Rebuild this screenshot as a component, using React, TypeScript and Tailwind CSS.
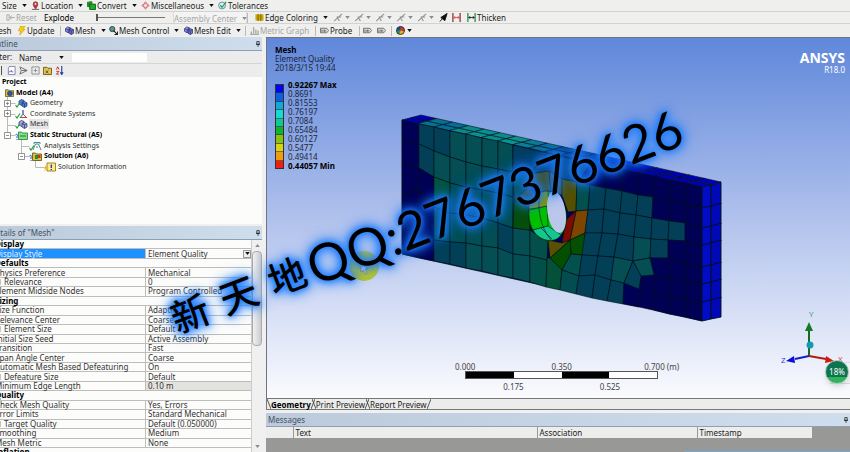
import type { ReactNode } from "react";

type Pt = [number, number];

/* ---------- small icons ---------- */

const Caret = ({ dim = false }: { dim?: boolean }) => (
  <svg viewBox="0 0 6 4" className={dim ? "h-[3px] w-[5px] shrink-0 text-[#8a8a8a]" : "h-[3px] w-[5px] shrink-0 text-[#111]"}>
    <path d="M0 0h6L3 4z" fill="currentColor" />
  </svg>
);

const Svg = ({ children }: { children: ReactNode }) => (
  <svg viewBox="0 0 10 10" className="h-[9px] w-[9px] shrink-0" fill="none">
    {children}
  </svg>
);

const PinIcon = () => (
  <Svg>
    <path d="M5 9C3 6 2.4 5 2.4 3.4a2.6 2.6 0 0 1 5.2 0C7.600 5 7 6 5 9z" fill="#c4303c" stroke="#6e1a26" strokeWidth=".6" />
    <circle cx="5" cy="3.300" r="1" fill="#fff" />
    <path d="M1 9.300h8" stroke="#555" />
  </Svg>
);
const ConvertIcon = () => (
  <Svg>
    <path d="M0 1l5-1 1 1v5l-5 1-1-1z" fill="#1f8f2c" />
    <path d="M3 3.500h6.500V9.500H3z" fill="#14b428" stroke="#0b5c16" />
    <path d="M4 2.500l2 2" stroke="#d22" />
  </Svg>
);
const MiscIcon = () => (
  <Svg>
    <path d="M5 .8L6.500 3h-3zM5 9.200L3.500 7h3zM.8 5L3 3.500v3zM9.200 5L7 6.500v-3z" stroke="#d4444c" strokeWidth=".8" />
  </Svg>
);
const TolIcon = () => (
  <Svg>
    <circle cx="4.500" cy="5" r="3.800" fill="#dcebf4" stroke="#5c86a4" />
    <path d="M2.500 4.500l2 2.500 4.500-6" stroke="#1f9a54" strokeWidth="1.300" />
  </Svg>
);
const BoltIcon = () => (
  <Svg>
    <path d="M4 0h5L6.500 3.600H9L3 10l1-4.600H1.500z" fill="#f6cf12" stroke="#b98a00" strokeWidth=".5" />
  </Svg>
);
const MeshIcon = () => (
  <Svg>
    <path d="M.5 3L3 1l3 1v4L3.500 7.500.5 6z" fill="#8d92d6" stroke="#2b2c78" strokeWidth=".8" />
    <path d="M4.500 4L7 3l2.500 1v4L7 9.500 4.500 8z" fill="#6f78cc" stroke="#22246e" strokeWidth=".8" />
    <path d="M.5 3l3 1.200L6 2M3.500 4.200v3M4.500 4.500L7 5.500l2.500-1.300M7 5.500v4" stroke="#22246e" strokeWidth=".6" />
  </Svg>
);
const ControlIcon = () => (
  <Svg>
    <circle cx="3.600" cy="3.400" r="2.900" fill="#5b9c6c" stroke="#263c7a" />
    <path d="M5 5l4.500 4.500M9.500 6v3.500H6" stroke="#222" strokeWidth="1.200" />
  </Svg>
);
const BarsIcon = () => (
  <Svg>
    <path d="M0 9.500h10M1.500 9V6M4 9V1M6.500 9V4M9 9V5" stroke="#aaa" strokeWidth="1.500" />
  </Svg>
);
const TagIcon = () => (
  <Svg>
    <path d="M.5 2.500h7L9.500 5l-2 2.500h-7z" fill="#eee" stroke="#444" strokeWidth=".8" />
    <path d="M2 4v2.500M3.500 4v2.500M5 4v2.500M6.500 4v2.500" stroke="#444" strokeWidth=".8" />
  </Svg>
);
const BallIcon = () => (
  <Svg>
    <circle cx="5" cy="5" r="4.700" fill="#244a9c" />
    <path d="M5 5V.3A4.700 4.700 0 0 1 9.500 6z" fill="#d23a2a" />
    <path d="M5 5l4.500 1A4.700 4.700 0 0 1 3 9.300z" fill="#e2b020" />
    <path d="M5 5L3 9.300A4.700 4.700 0 0 1 .3 5z" fill="#2b9c3c" />
    <circle cx="5" cy="5" r="4.400" stroke="#222" strokeWidth=".7" />
  </Svg>
);
const ColoringIcon = () => (
  <Svg>
    <path d="M.5 1.500h9v7h-9z" fill="#c9a800" />
    <path d="M3.500 1v8M6.500 1v8" stroke="#5a4c00" strokeWidth=".8" />
  </Svg>
);
const EdgeIcon = () => (
  <Svg>
    <path d="M0 9l4-3.500L9 1M3 4.500h5M4 5.500L6 9" stroke="#8f8f8f" strokeWidth="1.200" />
  </Svg>
);
const ArrowIcon = () => (
  <Svg>
    <path d="M1 9.500l3-3.500M2 5l7-4.500L6.500 8.500z" fill="#111" stroke="#111" />
  </Svg>
);
const GapIcon = ({ green = false }: { green?: boolean }) => (
  <Svg>
    <path d="M1 0v10M9 0v10" stroke={green ? "#128a30" : "#8c2020"} strokeWidth="1.300" />
    <path d="M2 5h6M3.500 3.500L2 5l1.500 1.500M6.500 3.500L8 5 6.500 6.500" stroke={green ? "#111" : "#c44"} strokeWidth=".9" />
  </Svg>
);
const ResetIcon = () => (
  <Svg>
    <path d="M1 2h2.500v6H1zM4 5h6M6.500 3L4 5l2.500 2" stroke="#aaa" />
  </Svg>
);
const PinHead = () => (
  <svg viewBox="0 0 5 7" className="h-[6px] w-[4px] shrink-0" fill="none">
    <path d="M1 .5h3v3.500H1zM0 4h5M2.500 4v3" stroke="#222" strokeWidth="1" />
  </svg>
);

/* ---------- toolbar ---------- */

const Tool = ({ w, icon, label, caret = false, dim = false }: { w: string; icon?: ReactNode; label?: string; caret?: boolean; dim?: boolean }) => (
  <button
    type="button"
    aria-label={label ? undefined : "tool"}
    className={`flex h-full shrink-0 items-center gap-px whitespace-nowrap ${w} ${dim ? "text-[#a5a5a5]" : "text-[#1c1c1c]"}`}
  >
    {icon}
    {label && <span>{label}</span>}
    {caret && <span className={label ? "ml-1" : "ml-px"}><Caret dim={dim} /></span>}
  </button>
);
const Sep = ({ w }: { w: string }) => (
  <span className={`flex h-[10px] shrink-0 ${w}`}><span className="w-px bg-[#b9b9b9]" /></span>
);

const Toolbars = () => (
  <header className="bg-[#efefee] text-[8px] leading-[11px]">
    <div className="flex h-[12px] items-center overflow-hidden border-b border-[#d2d2d2]">
      <Tool w="w-[31px] pl-0.5" label="Size" caret />
      <Tool w="w-[56px]" icon={<PinIcon />} label="Location" caret />
      <Tool w="w-[54px]" icon={<ConvertIcon />} label="Convert" caret />
      <Tool w="w-[77px]" icon={<MiscIcon />} label="Miscellaneous" caret />
      <Tool w="w-[60px]" icon={<TolIcon />} label="Tolerances" />
    </div>
    <div className="flex h-[12px] items-center overflow-hidden border-b border-[#d2d2d2] pl-1.5">
      <Tool w="w-[38px]" icon={<ResetIcon />} label="Reset" dim />
      <label htmlFor="explode" className="w-[52px]">Explode</label>
      <input id="explode" type="range" defaultValue={0} className="h-[8px] w-[69px] appearance-none bg-[linear-gradient(#777,#777)] bg-[length:100%_1px] bg-center bg-no-repeat [&::-webkit-slider-thumb]:h-[7px] [&::-webkit-slider-thumb]:w-[2px] [&::-webkit-slider-thumb]:appearance-none [&::-webkit-slider-thumb]:bg-[#555]" />
      <span className="ml-2 flex h-full w-[74px] items-center border-x border-[#dcdcdc] bg-[#f3f3f3]">
        <Tool w="w-[72px] pt-0.5" label="Assembly Center" caret dim />
      </span>
      <Sep w="w-[8px]" />
      <Tool w="w-[79px]" icon={<ColoringIcon />} label="Edge Coloring" caret />
      {[0, 1, 2, 3, 4].map((i) => <Tool key={i} w="w-[21px]" icon={<EdgeIcon />} caret dim />)}
      <Tool w="w-[13px]" icon={<ArrowIcon />} />
      <Tool w="w-[15px]" icon={<GapIcon />} />
      <Tool w="w-[60px]" icon={<GapIcon green />} label="Thicken" />
    </div>
    <div className="flex h-[13px] items-center overflow-hidden">
      <span className="flex w-[17px] justify-start"><Tool w="-ml-[9px]" label="Mesh" /></span>
      <Tool w="w-[43px]" icon={<BoltIcon />} label="Update" />
      <Sep w="w-[5px]" />
      <Tool w="w-[44px]" icon={<MeshIcon />} label="Mesh" caret />
      <Tool w="w-[75px]" icon={<ControlIcon />} label="Mesh Control" caret />
      <Tool w="w-[61px]" icon={<MeshIcon />} label="Mesh Edit" caret />
      <Sep w="w-[5px]" />
      <Tool w="w-[65px]" icon={<BarsIcon />} label="Metric Graph" dim />
      <Sep w="w-[5px]" />
      <Tool w="w-[39px]" icon={<TagIcon />} label="Probe" />
      <Sep w="w-[4px]" />
      <Tool w="w-[14px]" icon={<TagIcon />} />
      <Tool w="w-[14px]" icon={<TagIcon />} />
      <Sep w="w-[5px]" />
      <Tool w="w-[20px]" icon={<BallIcon />} caret />
    </div>
  </header>
);

/* ---------- outline ---------- */

const PanelTitle = ({ children, cut = false }: { children: ReactNode; cut?: boolean }) => (
  <div className="flex h-[14px] shrink-0 items-center justify-between overflow-hidden border-b border-[#8e9fb2] bg-gradient-to-r from-[#bccbdc] to-[#cfdeec] px-0.5 text-[8px] text-[#46505e]">
    <h2 className={cut ? "-ml-3 whitespace-nowrap" : "whitespace-nowrap"}>{children}</h2>
    <button type="button" aria-label="Pin panel"><PinHead /></button>
  </div>
);

const Expander = ({ open = false }: { open?: boolean }) => (
  <svg viewBox="0 0 7 7" className="h-[7px] w-[7px] shrink-0">
    <path d={open ? "M.5.5h6v6h-6zM2 3.500h3" : "M.5.5h6v6h-6zM2 3.500h3M3.500 2v3"} fill="#fff" stroke="#777" strokeWidth=".8" />
  </svg>
);
const Check = ({ children }: { children: ReactNode }) => (
  <svg viewBox="0 0 13 10" className="h-[10px] w-[13px] shrink-0" fill="none">
    {children}
    <path d="M.5 7l1.500 2L5 4.500" stroke="#1fa33a" strokeWidth="1.200" />
  </svg>
);
const Cubes = ({ c }: { c: string }) => (
  <g fill={c} stroke="#1e2f6c" strokeWidth=".7">
    <path d="M4 3l2.500-1.500L9 2.500V6L6.500 7.500 4 6z" />
    <path d="M7 4.500L9.500 3.500 12 5v3L9.500 9.500 7 8zM7 4.500l2.500 1.200L12 5M9.500 5.700v3.600" />
  </g>
);

const treeRows: { indent: string; label: string; bold?: boolean; sel?: boolean; exp?: "open" | "shut"; icon?: ReactNode }[] = [
  { indent: "pl-0", label: "Project", bold: true },
  {
    indent: "pl-[5px]", label: "Model (A4)", bold: true,
    icon: <svg viewBox="0 0 10 10" className="h-[9px] w-[9px]"><path d="M.5 2h3l1 1h5v6.500h-9z" fill="#e0bf3a" stroke="#4a4a20" strokeWidth=".8" /><path d="M3 4.500l2-1 3 1v3L5.500 9 3 7.500z" fill="#2c55b8" stroke="#123" strokeWidth=".6" /></svg>,
  },
  { indent: "pl-1", label: "Geometry", exp: "shut", icon: <Check><Cubes c="#4a7ce0" /></Check> },
  {
    indent: "pl-1", label: "Coordinate Systems", exp: "shut",
    icon: <Check><path d="M8 1v4" stroke="#1a44d0" strokeWidth="1.200" /><path d="M8 5L5 9" stroke="#18a8c0" strokeWidth="1.200" /><path d="M8 5l4 4M5 8.500h7" stroke="#d23c3c" /></Check>,
  },
  { indent: "pl-[15px]", label: "Mesh", sel: true, icon: <Check><Cubes c="#a6a4e0" /></Check> },
  {
    indent: "pl-1", label: "Static Structural (A5)", bold: true, exp: "open",
    icon: <svg viewBox="0 0 13 10" className="h-[10px] w-[13px]" fill="none"><path d="M3.500 2h3l1 1h5v6.500h-9z" fill="#7fe08a" stroke="#1f7a34" strokeWidth=".8" /><path d="M5 6h6" stroke="#1f7a34" /><path d="M.5 5c1-1.500 3 0 1.500 1.500V8M2 9v1" stroke="#2450c8" /></svg>,
  },
  {
    indent: "pl-[29px]", label: "Analysis Settings",
    icon: <Check><path d="M4 9L6.500 3h3L12 9M5 3V1.500h6V3M7 6h2" stroke="#3a7c8c" strokeWidth=".9" /></Check>,
  },
  {
    indent: "pl-[18px]", label: "Solution (A6)", bold: true, exp: "open",
    icon: <svg viewBox="0 0 13 10" className="h-[10px] w-[13px]" fill="none"><path d="M3.500 2h3l1 1h5v6.500h-9z" fill="#e0bf3a" stroke="#5a4a10" strokeWidth=".8" /><path d="M6 4h3v4H6z" fill="#1f8f3c" /><path d="M9 4h2.500v3H9z" fill="#c83030" /><path d="M.5 5c1-1.500 3 0 1.500 1.500V8M2 9v1" stroke="#2450c8" /></svg>,
  },
  {
    indent: "pl-[43px]", label: "Solution Information",
    icon: <svg viewBox="0 0 13 10" className="h-[10px] w-[13px]" fill="none"><path d="M4 1h8.500v8H4z" fill="#ffe985" stroke="#8a6c00" strokeWidth=".8" /><path d="M8.300 2.500v3.500M8.300 7v1.200" stroke="#1a35c0" strokeWidth="1.300" /><path d="M3 3L.8 6.500h1.700L1 10l3.500-4.500H3z" fill="#f2b600" /></svg>,
  },
];

const Outline = () => (
  <section className="flex h-[187px] shrink-0 flex-col bg-[#fcfcfa]">
    <PanelTitle cut>Outline</PanelTitle>
    <div className="flex h-[13px] shrink-0 items-center overflow-hidden border-b border-[#d5d5d5] bg-[#ececec] text-[8px] text-[#222]">
      <label htmlFor="filter" className="-ml-[9px] w-[27px]">Filter:</label>
      <select id="filter" defaultValue="Name" className="h-[11px] w-[48px] appearance-none bg-transparent pl-px pt-px text-[8px] leading-[9px] outline-none">
        <option>Name</option>
        <option>Tag</option>
      </select>
      <span className="-ml-[7px]"><Caret /></span>
      <input aria-label="Filter text" className="ml-2 h-[9px] w-[75px] bg-[#fdfdfd]" />
    </div>
    <div className="flex h-[13px] shrink-0 items-center gap-[3px] overflow-hidden bg-[#ececec]">
      <button type="button" aria-label="Note" className="mr-0.5 h-[9px] w-[2px] border-r border-[#555]" />
      <button type="button" aria-label="Refresh"><Svg><path d="M2.500.5H9v9H1.500V3z" fill="#fff" stroke="#7c7ca4" /><path d="M2 7l3-2v1.500h2" stroke="#5a5ad0" /></Svg></button>
      <button type="button" aria-label="Tag"><Svg><path d="M1 1l8 4-8 4 1.500-4zM3 5h6" stroke="#666" /></Svg></button>
      <button type="button" aria-label="Expand all"><Svg><path d="M1 1h8v8H1zM3 5h4M5 3v4" stroke="#8a8a8a" /></Svg></button>
      <button type="button" aria-label="Folder"><Svg><path d="M.5 1.500h4l1 1h4v7h-9z" fill="#e3c450" stroke="#6a5410" /><path d="M3 5l3 3M6 5L3 8" stroke="#444" /></Svg></button>
      <button type="button" aria-label="Sort"><Svg><path d="M1.500 4L3 .8 4.500 4M1.500 6h3l-3 3h3" stroke="#c02828" /><path d="M7.500 0v9M6 7l1.500 2.500L9 7" stroke="#223a9c" strokeWidth="1.200" /></Svg></button>
    </div>
    <div className="relative">
      <svg viewBox="0 0 60 95" className="absolute left-0 top-0 h-[95px] w-[60px]" fill="none" stroke="#bbb" strokeWidth="1">
        <path d="M7.500 20v38M7.500 26.500h8M7.500 37.500h8M7.500 48.500h8M7.500 58.500h8M21.500 63v17M21.500 69.500h8M21.500 79.500h9M35.500 84v6.500h9" />
      </svg>
      <ul className="relative grid h-[95px] grid-rows-[repeat(9,minmax(0,1fr))] text-[7px] leading-[10px] text-[#2f2f2f]">
        {treeRows.map((r) => (
          <li key={r.label} className={`flex items-center whitespace-nowrap ${r.indent}`}>
            {r.exp && <span className="mr-1"><Expander open={r.exp === "open"} /></span>}
            {r.icon}
            <span className={`ml-px px-px ${r.bold ? "font-bold text-black" : ""} ${r.sel ? "bg-[#e6e6e6]" : ""}`}>{r.label}</span>
          </li>
        ))}
      </ul>
    </div>
  </section>
);

/* ---------- details ---------- */

type Detail = { k: string; v?: string; kind?: "head" | "sub" | "sel" | "ro" };
const details: Detail[] = [
  { k: "Display", kind: "head" },
  { k: "Display Style", v: "Element Quality", kind: "sel" },
  { k: "Defaults", kind: "head" },
  { k: "Physics Preference", v: "Mechanical" },
  { k: "Relevance", v: "0", kind: "sub" },
  { k: "Element Midside Nodes", v: "Program Controlled" },
  { k: "Sizing", kind: "head" },
  { k: "Size Function", v: "Adaptive" },
  { k: "Relevance Center", v: "Coarse" },
  { k: "Element Size", v: "Default", kind: "sub" },
  { k: "Initial Size Seed", v: "Active Assembly" },
  { k: "Transition", v: "Fast" },
  { k: "Span Angle Center", v: "Coarse" },
  { k: "Automatic Mesh Based Defeaturing", v: "On" },
  { k: "Defeature Size", v: "Default", kind: "sub" },
  { k: "Minimum Edge Length", v: "0.10 m", kind: "ro" },
  { k: "Quality", kind: "head" },
  { k: "Check Mesh Quality", v: "Yes, Errors" },
  { k: "Error Limits", v: "Standard Mechanical" },
  { k: "Target Quality", v: "Default (0.050000)", kind: "sub" },
  { k: "Smoothing", v: "Medium" },
  { k: "Mesh Metric", v: "None" },
];

const DetailRow = ({ d }: { d: Detail }) => {
  if (d.kind === "head")
    return (
      <tr className="flex items-center border-b border-[#bdbdbd]">
        <th colSpan={2} className="text-left font-bold text-black">{d.k}</th>
      </tr>
    );
  return (
    <tr className="flex items-stretch border-b border-[#bdbdbd]">
      <th scope="row" className={`flex w-[151px] shrink-0 items-center border-r border-[#bdbdbd] text-left font-normal ${d.kind === "sel" ? "bg-[#1e90ff] text-[#e4f1ff]" : ""}`}>
        {d.kind === "sub" && <input type="checkbox" aria-label={d.k} className="mr-[3px] h-[6px] w-[6px] appearance-none border border-[#c4c4c4]" />}
        {d.k}
      </th>
      <td className={`flex flex-1 items-center justify-between pl-0.5 ${d.kind === "ro" ? "bg-[#e4e2df]" : ""}`}>
        {d.v}
        {d.kind === "sel" && (
          <button type="button" aria-label="Open list" className="flex h-[8px] w-[8px] items-center justify-center border border-[#999] bg-[#eee]"><Caret /></button>
        )}
      </td>
    </tr>
  );
};

const Details = () => (
  <section className="flex min-h-0 flex-1 flex-col border-t-2 border-[#f0f0f0]">
    <PanelTitle cut>Details of "Mesh"</PanelTitle>
    <div className="flex min-h-0 flex-1 overflow-hidden bg-[#fcfcfa]">
      <div className="min-w-0 flex-1 overflow-hidden">
        <table className="-ml-[5px] block whitespace-nowrap text-[8px] leading-[8px] text-[#333]">
          <tbody className="grid h-[208px] grid-rows-[repeat(22,minmax(0,1fr))]">
            {details.map((d) => <DetailRow key={d.k} d={d} />)}
          </tbody>
          <tbody className="block"><DetailRow d={{ k: "Inflation", kind: "head" }} /></tbody>
        </table>
      </div>
      <div className="flex w-[11px] flex-col items-center border-l border-[#ccc] bg-[#f0f0f0] pb-1">
        <span className="flex h-[11px] rotate-180 items-center"><Caret dim /></span>
        <span className="h-[95px] w-[10px] rounded-sm border border-[#aaa] bg-gradient-to-r from-[#f2f2f2] to-[#c9cbd0]" />
        <span className="mt-auto"><Caret dim /></span>
      </div>
    </div>
  </section>
);

/* ---------- model ---------- */

const N = "#000054";
const B = "#034058";
const T = "#044e54";
const G = "#045442";

/* vertical mesh lines of the left half, five cells high */
const leftX = [402, 419, 434, 450, 466, 482, 498, 513, 530];
const leftY = [
  [120, 141, 163, 195, 228, 254],
  [124, 144, 168, 190, 233, 258],
  [127, 151, 177, 207, 240, 261],
  [131, 157, 183, 213, 242, 264],
  [134, 162, 187, 215, 243, 268],
  [138, 166, 190, 218, 246, 271],
  [141, 169, 193, 223, 248, 275],
  [145, 172, 197, 228, 254, 278],
  [149, 174, 202, 230, 256, 282],
];
const leftC = [
  [N, N, N, N, N],
  [B, B, N, N, N],
  [B, T, G, T, B],
  [T, T, T, T, B],
  [T, T, T, T, T],
  [T, T, T, T, T],
  [T, T, T, B, T],
  [B, B, "#084c18", T, T],
];

/* vertical mesh lines of the right half */
const right: Pt[][] = [
  [[591, 163], [590, 185], [588, 210], [585, 233], [582, 255], [579, 276], [576, 294]],
  [[607, 166], [606, 188], [604, 209], [602, 233], [598, 256], [595, 275], [592, 298]],
  [[622, 169], [622, 191], [620, 213], [618, 234], [614, 257], [611, 280], [607, 301]],
  [[638, 173], [638, 195], [636, 215], [634, 237], [633, 261], [624, 283], [623, 304]],
  [[654, 176], [653, 197], [652, 218], [651, 239], [650, 258], [641, 288], [639, 307]],
];
const rightC = [
  [N, B, B, B, B, B],
  [N, B, B, B, B, B],
  [N, B, B, B, T, B],
  [N, B, B, T, N, N],
];
const far: Pt[][] = [
  [[654, 176], [653, 197], [652, 218], [651, 239], [650, 258], [654, 276], [654, 293], [654, 310]],
  [[669, 180], [669, 200], [669, 221], [668, 240], [668, 258], [669, 278], [669, 297], [669, 314]],
  [[686, 183], [686, 205], [685, 223], [685, 241], [685, 263], [685, 282], [685, 300], [685, 317]],
  [[702, 187], [702, 208], [702, 228], [702, 245], [702, 267], [702, 284], [702, 302], [702, 321]],
];
const farC = [
  [N, N, B, B, N, N, N],
  [N, N, B, N, N, N, N],
  [N, N, N, N, N, N, N],
];

const ring: [string, string][] = [
  ["513,145 530,149 547,153 530,174 513,172", "#043d63"],
  ["547,153 568,158 591,163 577,182 562,179 549,171 530,174", "#083f66"],
  ["513,172 530,174 530,186 514,200", "#04504c"],
  ["514,200 530,186 536,196 529,208", "#3c5014"],
  ["530,174 549,171 551,191 540,192 530,186", "#4a5010"],
  ["549,171 562,179 562,195 551,191", "#515008"],
  ["562,179 577,182 576,211 568,212 562,195", "#545000"],
  ["577,182 590,185 588,210 576,211", "#04504c"],
  ["576,211 588,210 585,233 570,240", "#7c4600"],
  ["576,211 570,240 562,243 566,220", "#7c0c00"],
  ["514,200 529,208 530,230 513,228", "#064e0c"],
  ["530,230 542,239 548,240 547,260 530,256", "#03504a"],
  ["548,240 562,243 570,240 550,258", "#5c5000"],
  ["570,240 585,233 584,255 571,254", "#045000"],
  ["550,258 570,240 571,254 562,270", "#044e00"],
  ["530,256 547,260 546,287 530,282", "#03504a"],
  ["547,258 550,258 562,270 560,290 546,287", "#055038"],
  ["571,254 582,255 579,276 562,270", "#04504c"],
  ["562,270 579,276 576,294 560,290", "#034c50"],
];

const Quad = ({ pts, fill }: { pts: Pt[]; fill: string }) => (
  <polygon points={pts.map((p) => p.join(",")).join(" ")} fill={fill} />
);

const topColors = ["#0000b0", "#087090", "#086c98", "#0a8a8a", "#0a9090", "#0a8c8c", "#0a9490", "#087c98", "#086f9a", "#06509c", "#0640a0", "#0430a0", "#0218b0", "#0008b4", "#0004b4", "#0000b0", "#0000b0", "#0000b0", "#0000b4"];

const Model = () => {
  const n = topColors.length;
  const step = 300 / n;
  return (
    <svg viewBox="400 110 324 214" className="absolute left-[133px] top-[72px] h-[214px] w-[324px]" stroke="#001018" strokeWidth=".6" strokeLinejoin="round" role="img" aria-label="Meshed plate with a hole">
      <polygon points="402,120 702,187 702,321 402,254" fill={N} />
      {topColors.map((c, i) => {
        const x = 402 + i * step;
        const y = 120 + (i * step * 67) / 300;
        const dy = (step * 67) / 300;
        return (
          <g key={i}>
            <Quad fill={c} pts={[[x, y], [x + 9.5, y - 2.5], [x + 9.5 + step, y - 2.5 + dy], [x + step, y + dy]]} />
            <Quad fill={c} pts={[[x + 9.5, y - 2.5], [x + 19, y - 5], [x + 19 + step, y - 5 + dy], [x + 9.5 + step, y - 2.5 + dy]]} />
          </g>
        );
      })}
      {leftC.map((col, i) => col.map((c, j) => (
        <Quad key={`${i}-${j}`} fill={c} pts={[[leftX[i], leftY[i][j]], [leftX[i + 1], leftY[i + 1][j]], [leftX[i + 1], leftY[i + 1][j + 1]], [leftX[i], leftY[i][j + 1]]]} />
      )))}
      {ring.map(([p, c]) => <polygon key={p} points={p} fill={c} />)}
      {rightC.map((col, i) => col.map((c, j) => (
        <Quad key={`${i}-${j}`} fill={c} pts={[right[i][j], right[i + 1][j], right[i + 1][j + 1], right[i][j + 1]]} />
      )))}
      {farC.map((col, i) => col.map((c, j) => (
        <Quad key={`${i}-${j}`} fill={c} pts={[far[i][j], far[i + 1][j], far[i + 1][j + 1], far[i][j + 1]]} />
      )))}
      <polygon points="633,261 650,258 654,275 641,276" fill={T} />
      <polygon points="633,261 641,276 639,289 624,283" fill={B} />
      {[187, 208, 228, 245, 267, 284, 302].map((y, i, a) => {
        const b = a[i + 1] ?? 321;
        return (
          <g key={y} strokeWidth=".9">
            <polygon points={`702,${y} 711,${y - 2} 711,${b - 2} 702,${b}`} fill="#000cc8" />
            <polygon points={`711,${y - 2} 721,${y - 5} 721,${b - 4} 711,${b - 2}`} fill="#0008b8" />
          </g>
        );
      })}
      <ellipse cx="547.500" cy="216" rx="19" ry="25" transform="rotate(-8 547.500 216)" fill="#0c0" />
      <path d="M528.500 209C530 198 539 191 548 191L549 206 538 208z" fill="#8c9800" />
      <path d="M529 210L547 206 548 226 533 230C530 225 528.500 218 529 210z" fill="#00c000" />
      <path d="M533 230L548 226 561 235C556 243 541 243 533 230z" fill="#12c890" />
      <path d="M540 193C537 208 540 227 551 240M541 228L552 239" fill="none" />
      <ellipse cx="556.500" cy="212" rx="9" ry="21" transform="rotate(-9 556.500 212)" fill="#bac7ea" stroke="none" />
    </svg>
  );
};

const legend: [string, string][] = [
  ["#0000ff", "0.92267 Max"],
  ["#0862e0", "0.8691"],
  ["#10a8d8", "0.81553"],
  ["#18d8d0", "0.76197"],
  ["#10c890", "0.7084"],
  ["#10b428", "0.65484"],
  ["#8cc010", "0.60127"],
  ["#d8d410", "0.5477"],
  ["#f09c10", "0.49414"],
  ["#f02010", "0.44057 Min"],
];

const Triad = () => (
  <svg viewBox="778 308 70 60" className="absolute bottom-[31px] right-[2px] h-[60px] w-[70px]" aria-hidden="true">
    <path d="M809 357V332" stroke="#146c20" strokeWidth="2" />
    <path d="M809 323l4 9h-8z" fill="#147a24" />
    <path d="M809 357l-14 3" stroke="#1420c8" strokeWidth="2" />
    <path d="M786 362l8-5 1 7z" fill="#0a10d8" />
    <path d="M809 357l17 3" stroke="#b01c14" strokeWidth="2" />
    <path d="M834 362l-8-5-1 7z" fill="#d01c10" />
    <circle cx="810" cy="346" r="3.500" fill="#109cac" />
    <g fontFamily="Open Sans" fontSize="8">
      <text x="809" y="318" fill="#2c9c48">Y</text>
      <text x="781" y="364" fill="#3040d0">Z</text>
      <text x="838" y="363" fill="#d03c3c">X</text>
    </g>
  </svg>
);

const Ruler = () => (
  <div className="absolute bottom-[7px] left-[34%] w-[193px] text-[8px] leading-[9px] text-[#444]">
    <div className="-mx-4 flex justify-between">
      <span className="w-8 text-center">0.000</span>
      <span className="w-8 text-center">0.350</span>
      <span className="w-8 whitespace-nowrap">&nbsp;0.700 (m)</span>
    </div>
    <div className="grid h-[8px] grid-cols-4 border border-[#555] bg-white">
      <span className="bg-black" /><span /><span className="bg-black" /><span />
    </div>
    <div className="mt-[3px] grid grid-cols-2">
      <span className="text-center">0.175</span>
      <span className="text-center">0.525</span>
    </div>
  </div>
);

const Viewport = () => (
  <div className="relative min-h-0 flex-1 overflow-hidden border-l border-t border-[#6e7480] bg-gradient-to-b from-[#6087da] via-[#b0c1ec] to-[#fbfbfe]">
    <div className="px-2 pt-[7px] text-[8px] leading-[9px] text-[#1c2638]">
      <p className="font-bold text-black">Mesh</p>
      <p>Element Quality</p>
      <p>2018/3/15 19:44</p>
      <div className="mt-2 flex gap-1">
        <div className="mt-1 flex h-[85px] w-[9px] flex-col border border-[#333]">
          {legend.map(([c]) => <span key={c} className="flex-1 border-b border-[#333]/60 last:border-b-0" style={{ backgroundColor: c }} />)}
        </div>
        <ul>
          {legend.map(([c, t], i) => <li key={c} className={i === 0 || i === 9 ? "font-bold text-black" : ""}>{t}</li>)}
        </ul>
      </div>
    </div>
    <div className="absolute right-[5px] top-[12px] text-right text-white">
      <p className="text-[14px] font-bold leading-[15px]">ANSYS</p>
      <p className="text-[8px] leading-[9px]">R18.0</p>
    </div>
    <Model />
    <svg viewBox="0 0 30 30" className="absolute left-[82px] top-[213px] h-[30px] w-[30px]" aria-hidden="true">
      <circle cx="15" cy="15" r="15" fill="#b9c42c" />
      <path d="M12 11v10l2.500-2 2 4 1.500-1-2-4h3z" fill="#dfe6f4" stroke="#667" strokeWidth=".6" />
    </svg>
    <Ruler />
    <Triad />
    <span className="absolute bottom-[14px] right-0 h-[22px] w-[20px] border-y border-[#dcdce0] bg-[#f2f2f4]" />
    <span className="absolute bottom-[14px] right-[1px] flex h-[24px] w-[24px] items-center justify-center rounded-full border border-[#a8c8b8] bg-[linear-gradient(#0e7450_75%,#2fb45c_75%)] text-[8px] text-white shadow-md">18%</span>
  </div>
);

const Tabs = () => (
  <div role="tablist" className="flex h-[12px] shrink-0 items-center border-y border-l border-[#777] bg-[#ececea] text-[8px] leading-[9px] text-[#222]">
    {["Geometry", "Print Preview", "Report Preview"].map((t, i) => (
      <button key={t} type="button" role="tab" aria-selected={i === 0} className={`flex items-center whitespace-nowrap ${i === 0 ? "font-bold text-black" : ""}`}>
        <svg viewBox="0 0 4 10" className="h-[10px] w-[4px]"><path d="M0 0l4 10" stroke="#333" strokeWidth=".8" /></svg>
        {t}
        <svg viewBox="0 0 4 10" className="-mr-[3px] h-[10px] w-[4px]"><path d="M4 0L0 10" stroke="#333" strokeWidth=".8" /></svg>
      </button>
    ))}
  </div>
);

const Messages = () => (
  <section className="mt-[3px] flex h-[39px] shrink-0 flex-col bg-[#989896]">
    <PanelTitle>Messages</PanelTitle>
    <table className="w-[546px] max-w-full table-fixed text-left text-[8px] leading-[11px] text-[#222]">
      <thead>
        <tr className="bg-[#ededeb]">
          <th className="w-[27px] border-r border-[#999]" />
          <th className="w-[244px] border-r border-[#999] pl-0.5 font-normal">Text</th>
          <th className="w-[160px] border-r border-[#999] pl-0.5 font-normal">Association</th>
          <th className="pl-0.5 font-normal">Timestamp</th>
        </tr>
      </thead>
    </table>
    <span className="mt-auto h-px w-[166px] self-end bg-[#6fa8dc]" />
  </section>
);

const Watermark = () => (
  <div className="pointer-events-none absolute left-[172px] top-[294px] flex origin-left rotate-[-21deg] select-none items-center whitespace-nowrap font-['Lato','Noto_Sans_CJK_SC',sans-serif] text-[52px] leading-[52px] text-black [text-shadow:0_0_5px_#1c7cff,0_0_8px_#1c7cff,0_0_12px_#1c7cff,0_0_16px_#1c7cff]">
    <span className="flex gap-3.5 pr-1 text-[38px] font-medium"><span>新</span><span>天</span><span>地</span></span>
    <span>QQ:2767376626</span>
  </div>
);

export default function App() {
  return (
    <div className="relative flex h-screen flex-col overflow-hidden bg-[#f0f0f0] font-['Noto_Sans','Open_Sans',sans-serif]">
      <Toolbars />
      <div className="flex min-h-0 flex-1">
        <aside className="flex w-[262px] shrink-0 flex-col">
          <Outline />
          <Details />
        </aside>
        <main className="ml-1 flex min-w-0 flex-1 flex-col">
          <Viewport />
          <Tabs />
          <Messages />
        </main>
      </div>
      <Watermark />
    </div>
  );
}
